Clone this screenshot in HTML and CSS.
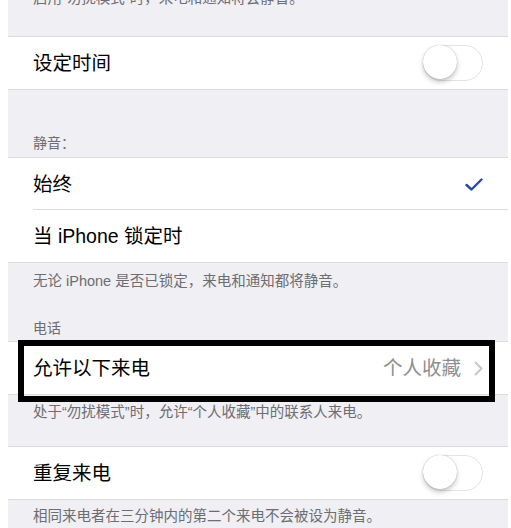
FILE: index.html
```html
<!DOCTYPE html>
<html lang="zh-CN">
<head>
    <meta charset="UTF-8">
    <meta name="viewport" content="width=device-width, initial-scale=1.0">
    <title>勿扰模式</title>
    <link rel="stylesheet" href="styles.css">
</head>
<body>
    <div class="panel">
        <div class="note note-top">启用“勿扰模式”时，来电和通知将会静音。</div>

        <div class="group">
            <div class="row">
                <span class="row-title">设定时间</span>
                <span class="switch"></span>
            </div>
        </div>

        <div class="header header-first">静音：</div>

        <div class="group">
            <div class="row row-split">
                <span class="row-title">始终</span>
                <svg class="check" width="18" height="13" viewBox="0 0 18 13">
                    <path d="M1.5 7 L6.5 11.5 L16.5 1.5" fill="none" stroke="#2b4b9b" stroke-width="2.4" stroke-linecap="round" stroke-linejoin="round"/>
                </svg>
            </div>
            <div class="row">
                <span class="row-title">当 iPhone 锁定时</span>
            </div>
        </div>

        <div class="note">无论 iPhone 是否已锁定，来电和通知都将静音。</div>

        <div class="header">电话</div>

        <div class="group">
            <div class="row row-marked">
                <span class="row-title">允许以下来电</span>
                <span class="row-value">个人收藏
                    <svg class="chevron" width="9" height="15" viewBox="0 0 9 15">
                        <path d="M1.5 1.5 L7.5 7.5 L1.5 13.5" fill="none" stroke="#c4c4c9" stroke-width="1.8" stroke-linecap="round" stroke-linejoin="round"/>
                    </svg>
                </span>
            </div>
        </div>

        <div class="note note-mid">处于“勿扰模式”时，允许“个人收藏”中的联系人来电。</div>

        <div class="group">
            <div class="row">
                <span class="row-title">重复来电</span>
                <span class="switch"></span>
            </div>
        </div>

        <div class="note note-last">相同来电者在三分钟内的第二个来电不会被设为静音。</div>
    </div>
</body>
</html>
```

FILE: styles.css
```css
html,
body {
    margin: 0;
    padding: 0;
    background-color: #ffffff;
    overflow: hidden;
}

body {
    font-family: "Liberation Sans", "Noto Sans CJK SC", sans-serif;
    color: #000000;
}

.panel {
    width: 500px;
    height: 528px;
    margin-left: 8px;
    background-color: #efeff4;
    overflow: hidden;
}

.note {
    padding: 8px 25px 0;
    font-size: 14.5px;
    line-height: 20px;
    color: #6d6d72;
}

/* caption cut off by the top edge of the screen */
.note-top {
    margin-top: -12px;
    height: 48px;
    padding-top: 0;
}

.note-mid {
    padding-top: 7px;
    height: 44px;
}

.note-last {
    padding-top: 6px;
}

.header {
    padding: 27px 25px 3px;
    font-size: 14px;
    line-height: 20px;
    color: #6d6d72;
}

.header-first {
    padding-top: 43px;
    padding-bottom: 4px;
}

.group {
    background-color: #ffffff;
    border-top: 1px solid #dcdce0;
    border-bottom: 1px solid #dcdce0;
}

.row {
    height: 52px;
    padding: 0 25px;
    display: flex;
    align-items: center;
    justify-content: space-between;
    position: relative;
}

.row-split::after {
    content: "";
    position: absolute;
    left: 25px;
    right: 0;
    bottom: 0;
    border-bottom: 1px solid #dcdce0;
}

.row-title {
    font-size: 19.5px;
    line-height: 26px;
}

.row-value {
    display: flex;
    align-items: center;
    gap: 13px;
    font-size: 19.5px;
    line-height: 26px;
    color: #8e8e93;
}

/* annotation box drawn over the row */
.row-marked::before {
    content: "";
    position: absolute;
    left: 10px;
    right: 13px;
    top: -2px;
    bottom: -8px;
    border: 6px solid #000000;
}

.switch {
    width: 60px;
    height: 36px;
    box-sizing: border-box;
    border: 1.5px solid #e3e3e7;
    border-radius: 18px;
    position: relative;
    background-color: #ffffff;
}

.switch::after {
    content: "";
    position: absolute;
    left: -1px;
    top: -1px;
    width: 34px;
    height: 34px;
    border-radius: 50%;
    background-color: #ffffff;
    box-shadow: 0 3px 5px rgba(0, 0, 0, 0.22), 0 0 1px rgba(0, 0, 0, 0.35);
}
```
